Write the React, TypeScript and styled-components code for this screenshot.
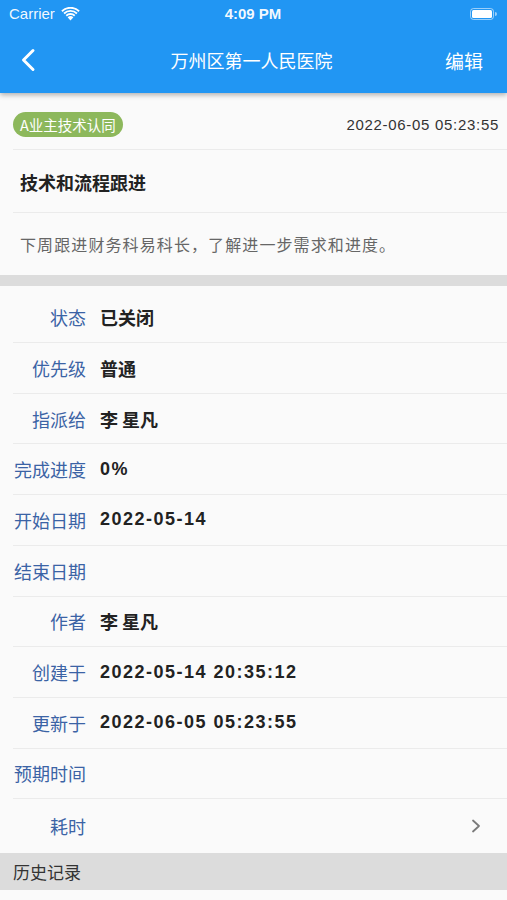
import React from "react";
import styled, { createGlobalStyle } from "styled-components";

const Global = createGlobalStyle`
  html, body { margin: 0; padding: 0; background: #fafafa; }
  body { font-family: "Liberation Sans", "Noto Sans CJK SC", sans-serif; overflow: hidden; }
  * { box-sizing: border-box; }
`;

const Page = styled.div`
  width: 507px;
  height: 900px;
  overflow: hidden;
  display: flex;
  flex-direction: column;
  background: #fafafa;
`;

const Header = styled.header`
  position: relative;
  z-index: 2;
  background: #2196f3;
  color: #fff;
  box-shadow: 0 2px 5px rgba(0, 0, 0, 0.3);
  flex: none;
`;

const StatusBar = styled.div`
  height: 27px;
  display: grid;
  grid-template-columns: 1fr auto 1fr;
  align-items: center;
  padding: 0 10px 0 9px;
  font-size: 15px;
  color: rgba(255, 255, 255, 0.95);
`;

const Carrier = styled.div`
  display: flex;
  align-items: center;
  gap: 6px;
`;

const Clock = styled.div`
  font-weight: 700;
`;

const Battery = styled.div`
  justify-self: end;
  display: flex;
  align-items: center;
`;

const NavBar = styled.div`
  height: 66px;
  display: grid;
  grid-template-columns: 1fr auto 1fr;
  align-items: center;
  padding: 0 24px 0 20px;
`;

const NavTitle = styled.div`
  font-size: 18px;
  font-family: "Noto Sans CJK SC", sans-serif;
`;

const NavAction = styled.div`
  justify-self: end;
  font-size: 19px;
  font-family: "Noto Sans CJK SC", sans-serif;
`;

const BackButton = styled.div`
  display: flex;
  align-items: center;
`;

const Summary = styled.section`
  display: flex;
  flex-direction: column;
`;

const SummaryRow = styled.div<{ $h: number; $divider?: boolean }>`
  height: ${(p) => p.$h}px;
  margin-left: 13px;
  display: flex;
  align-items: center;
  justify-content: space-between;
  border-bottom: ${(p) => (p.$divider ? "1px solid #ebebeb" : "none")};
`;

const Badge = styled.span`
  height: 25px;
  padding: 0 7px;
  border-radius: 13px;
  background: #8db85c;
  color: #fff;
  font-size: 14.5px;
  display: inline-flex;
  align-items: center;
  font-family: "Noto Sans CJK SC", sans-serif;
  margin-top: 6px;
`;

const DateText = styled.span`
  font-size: 15px;
  letter-spacing: 0.7px;
  color: #333;
  padding-right: 8px;
  margin-top: 6px;
`;

const Title = styled.div`
  font-size: 18px;
  font-weight: 700;
  color: #222;
  padding-left: 7px;
  font-family: "Noto Sans CJK SC", sans-serif;
  margin-top: 2px;
`;

const Desc = styled.div`
  font-size: 16px;
  letter-spacing: 1.1px;
  color: #666;
  padding-left: 7px;
  font-family: "Noto Sans CJK SC", sans-serif;
`;

const Band = styled.div`
  height: 11px;
  background: #dcdcdc;
  flex: none;
`;

const DetailList = styled.div`
  padding-top: 6.4px;
  display: flex;
  flex-direction: column;
`;

const DetailRow = styled.div<{ $last?: boolean }>`
  height: ${(p) => (p.$last ? 53.5 : 50.7)}px;
  margin-left: 13px;
  display: flex;
  align-items: center;
  gap: 14px;
  border-bottom: ${(p) => (p.$last ? "none" : "1px solid #ebebeb")};
  padding-right: 26px;
  flex: none;
`;

const Label = styled.div`
  width: 73px;
  text-align: right;
  font-size: 18px;
  color: #3b63a5;
  font-family: "Noto Sans CJK SC", sans-serif;
  white-space: nowrap;
`;

const Value = styled.div<{ $num?: boolean }>`
  flex: 1;
  font-size: 18px;
  font-weight: 700;
  color: #222;
  letter-spacing: ${(p) => (p.$num ? "1.5px" : "0")};
  font-family: ${(p) =>
    p.$num ? `"Liberation Sans", sans-serif` : `"Noto Sans CJK SC", sans-serif`};
`;

const SectionHeader = styled.div`
  height: 37px;
  background: #dcdcdc;
  display: flex;
  align-items: center;
  padding-left: 13px;
  font-size: 17px;
  color: #333;
  font-family: "Noto Sans CJK SC", sans-serif;
  flex: none;
`;

const HistoryRow = styled.div`
  display: flex;
  justify-content: flex-end;
  padding: 8px 12px 0 0;
  font-size: 15px;
  letter-spacing: 0.7px;
  color: #333;
`;

const WifiIcon = () => (
  <svg width="19" height="14" viewBox="0 0 19 14">
    <path d="M9.5 13.5 L6.6 10.3 A4.2 4.2 0 0 1 12.4 10.3 Z" fill="#fff" />
    <path d="M4.6 8.1 A7 7 0 0 1 14.4 8.1 L13.1 9.5 A5.2 5.2 0 0 0 5.9 9.5 Z" fill="#fff" />
    <path d="M2.4 5.8 A10.2 10.2 0 0 1 16.6 5.8 L15.3 7.2 A8.3 8.3 0 0 0 3.7 7.2 Z" fill="#fff" />
    <path d="M0.3 3.5 A13.4 13.4 0 0 1 18.7 3.5 L17.4 4.9 A11.5 11.5 0 0 0 1.6 4.9 Z" fill="#fff" />
  </svg>
);

const BatteryIcon = () => (
  <svg width="27" height="12" viewBox="0 0 27 12">
    <rect x="0.5" y="0.5" width="23" height="11" rx="3" fill="none" stroke="rgba(255,255,255,0.55)" />
    <rect x="2" y="2" width="20" height="8" rx="1.5" fill="#fff" />
    <path d="M25 4 A2 2 0 0 1 25 8 Z" fill="rgba(255,255,255,0.55)" />
  </svg>
);

const BackIcon = () => (
  <svg width="16" height="24" viewBox="0 0 16 24">
    <polyline points="13,2.5 3.5,12 13,21.5" fill="none" stroke="#fff" strokeWidth="3" strokeLinecap="round" strokeLinejoin="round" />
  </svg>
);

const ChevronIcon = () => (
  <svg width="10" height="14" viewBox="0 0 10 14">
    <polyline points="2,1.5 8,7 2,12.5" fill="none" stroke="#7a7a7a" strokeWidth="1.8" strokeLinecap="round" strokeLinejoin="round" />
  </svg>
);

type Item = { label: string; value?: string; num?: boolean };

const items: Item[] = [
  { label: "状态", value: "已关闭" },
  { label: "优先级", value: "普通" },
  { label: "指派给", value: "李 星凡" },
  { label: "完成进度", value: "0%", num: true },
  { label: "开始日期", value: "2022-05-14", num: true },
  { label: "结束日期" },
  { label: "作者", value: "李 星凡" },
  { label: "创建于", value: "2022-05-14 20:35:12", num: true },
  { label: "更新于", value: "2022-06-05 05:23:55", num: true },
  { label: "预期时间" },
];

export default function App() {
  return (
    <Page>
      <Global />
      <Header>
        <StatusBar>
          <Carrier>
            Carrier
            <WifiIcon />
          </Carrier>
          <Clock>4:09 PM</Clock>
          <Battery>
            <BatteryIcon />
          </Battery>
        </StatusBar>
        <NavBar>
          <BackButton>
            <BackIcon />
          </BackButton>
          <NavTitle>万州区第一人民医院</NavTitle>
          <NavAction>编辑</NavAction>
        </NavBar>
      </Header>

      <Summary>
        <SummaryRow $h={57} $divider>
          <Badge>A业主技术认同</Badge>
          <DateText>2022-06-05 05:23:55</DateText>
        </SummaryRow>
        <SummaryRow $h={63} $divider>
          <Title>技术和流程跟进</Title>
        </SummaryRow>
        <SummaryRow $h={62}>
          <Desc>下周跟进财务科易科长，了解进一步需求和进度。</Desc>
        </SummaryRow>
      </Summary>

      <Band />

      <DetailList>
        {items.map((it) => (
          <DetailRow key={it.label}>
            <Label>{it.label}</Label>
            <Value $num={it.num}>{it.value ?? ""}</Value>
          </DetailRow>
        ))}
        <DetailRow $last>
          <Label>耗时</Label>
          <Value />
          <ChevronIcon />
        </DetailRow>
      </DetailList>

      <SectionHeader>历史记录</SectionHeader>
      <HistoryRow>2022-06-05 05:23:55</HistoryRow>
    </Page>
  );
}
